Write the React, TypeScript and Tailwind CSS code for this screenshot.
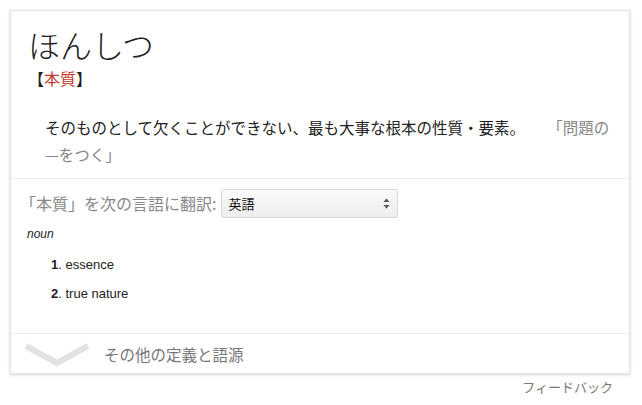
import React from "react";

const jp = { fontFamily: '"Noto Sans CJK JP", "Noto Sans", sans-serif' };
const ar = { fontFamily: '"Liberation Sans", Arial, sans-serif' };

export default function App() {
  return (
    <div className="w-[642px] h-[405px] bg-white overflow-hidden" style={jp}>
      <div className="pt-[10px] pl-[10px]">
        <div className="w-[620px] h-[364px] bg-white border border-[#e4e4e4] shadow-[0_1px_3px_rgba(0,0,0,0.18)] flex flex-col">
          {/* Header section */}
          <div className="pl-[17px] pr-[4px] pt-[13px] pb-[10px] border-b border-[#ececec]">
            <div className="text-[32px] leading-[40px] text-[#222] font-light">ほんしつ</div>
            <div className="mt-[2px] text-[16px] leading-[24px] text-[#222]">
              【<span className="text-[#c0392b]">本質</span>】
            </div>
            <div className="mt-[24px] pl-[17px] text-[15.5px] leading-[27px] text-[#222] whitespace-nowrap">
              <span>そのものとして欠くことができない、最も大事な根本の性質・要素。</span>
              <span className="ml-[30px] text-[#878787]">「問題の</span>
              <br />
              <span className="text-[#878787]">—をつく」</span>
            </div>
          </div>

          {/* Translation section */}
          <div className="flex-1 pl-[9px] pt-[10px]">
            <div className="flex items-center h-[29px]">
              <span className="text-[16px] text-[#878787] leading-[29px]">「本質」を次の言語に翻訳:</span>
              <div className="ml-[5px] w-[177px] h-[29px] border border-[#dadada] rounded-[2px] bg-gradient-to-b from-[#fafafa] to-[#ededed] flex items-center justify-between pl-[6px] pr-[7px]">
                <span className="text-[13px] text-[#111]">英語</span>
                <svg width="7" height="11" viewBox="0 0 7 11">
                  <path d="M3.5 0.5 L6.5 4 L0.5 4 Z" fill="#555" />
                  <path d="M3.5 10.5 L6.5 7 L0.5 7 Z" fill="#555" />
                </svg>
              </div>
            </div>
            <div className="mt-[8px] pl-[7px] text-[12px] leading-[16px] italic text-[#222]" style={ar}>noun</div>
            <div className="mt-[14px] pl-[31px] text-[13px] leading-[18px] text-[#222]" style={ar}>
              <div>
                <span className="font-bold">1</span>. essence
              </div>
              <div className="mt-[11px]">
                <span className="font-bold">2</span>. true nature
              </div>
            </div>
          </div>

          {/* Footer row */}
          <div className="h-[40px] border-t border-[#ececec] flex items-center">
            <svg width="66" height="24" viewBox="0 0 66 24" className="ml-[13px] mt-[2px]">
              <path d="M2 3 L33 20 L64 3" fill="none" stroke="#e2e2e2" strokeWidth="6" />
            </svg>
            <span className="ml-[14px] text-[15.5px] text-[#777] mt-[2px]">その他の定義と語源</span>
          </div>
        </div>
        <div className="w-[620px] text-right pr-[17px] pt-[4px] text-[13px] leading-[18px] text-[#777]">フィードバック</div>
      </div>
    </div>
  );
}
